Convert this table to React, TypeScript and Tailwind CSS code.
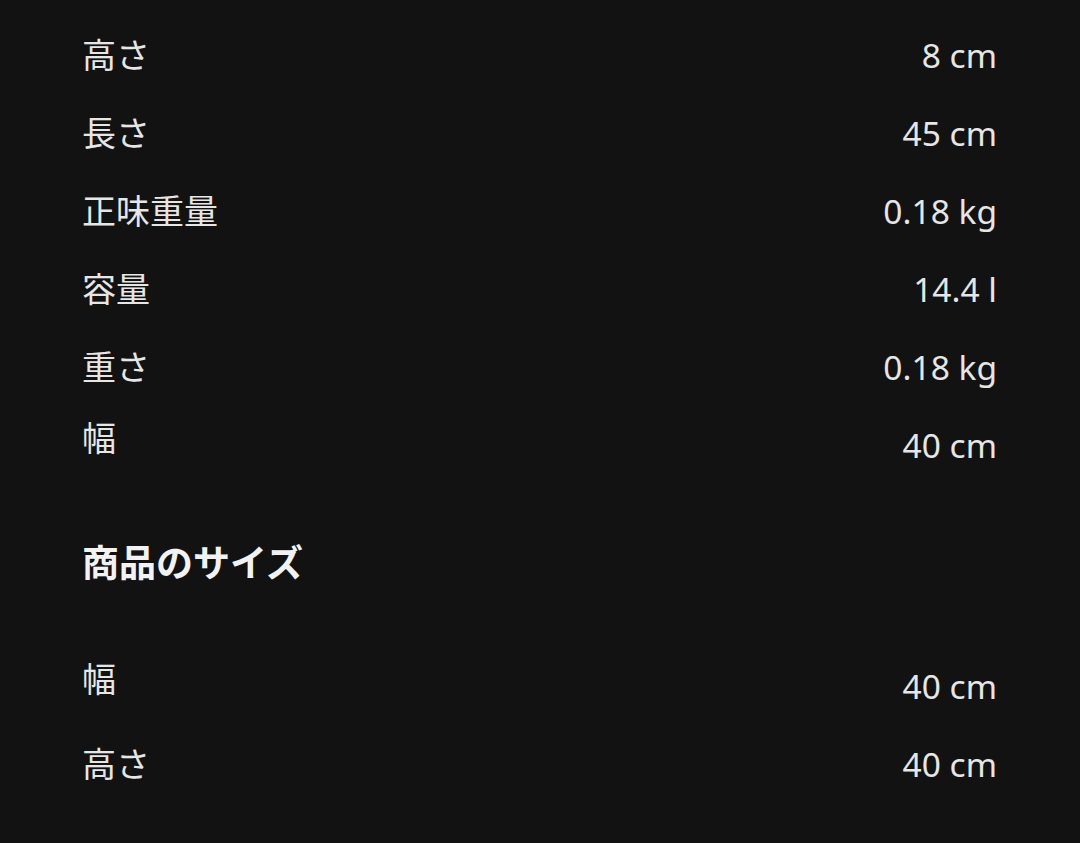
const specs = [
  { label: "高さ", value: "8 cm" },
  { label: "長さ", value: "45 cm" },
  { label: "正味重量", value: "0.18 kg" },
  { label: "容量", value: "14.4 l" },
  { label: "重さ", value: "0.18 kg" },
  { label: "幅", value: "40 cm" },
];

const productSize = [
  { label: "幅", value: "40 cm" },
  { label: "高さ", value: "40 cm" },
];

const SpecRow = ({ label, value }: { label: string; value: string }) => (
  <div className="flex items-center justify-between h-[78px]">
    {/* 幅 sits a little higher than its value in the original */}
    <span className={label === "幅" ? "pb-[14px]" : ""}>{label}</span>
    <span className="text-[33.5px]">{value}</span>
  </div>
);

export default function App() {
  return (
    <div
      className="min-h-[843px] w-full bg-[#121212] text-[#e6e6e6] text-[34px] leading-[48px] pl-[82px] pr-[83px] pt-[16px]"
      style={{ fontFamily: '"Noto Sans", "Noto Sans CJK JP", sans-serif' }}
    >
      {specs.map((s, i) => (
        <SpecRow key={i} label={s.label} value={s.value} />
      ))}

      <h2 className="mt-[54px] h-[50px] flex items-center text-[37px] font-bold text-[#f2f2f2]">
        商品のサイズ
      </h2>

      <div className="mt-[59px]">
        {productSize.map((s, i) => (
          <SpecRow key={i} label={s.label} value={s.value} />
        ))}
      </div>
    </div>
  );
}
